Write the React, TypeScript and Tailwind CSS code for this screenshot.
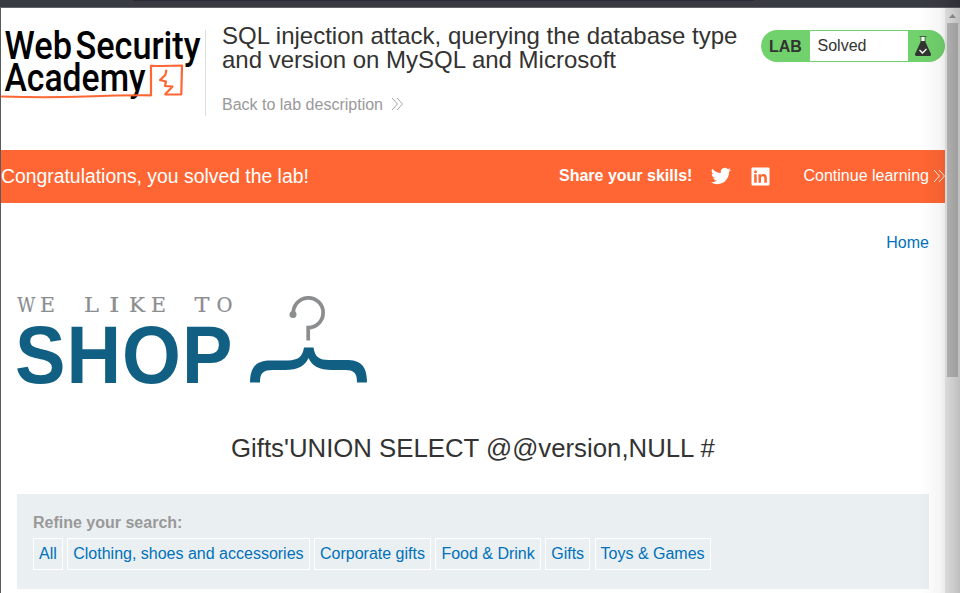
import React from "react";

const filters = ["All", "Clothing, shoes and accessories", "Corporate gifts", "Food & Drink", "Gifts", "Toys & Games"];

const shopLetters: [string, number, number][] = [
  ["W", 17.2, 18], ["E", 40, 15], ["L", 84, 15], ["I", 109, 10.5],
  ["K", 129, 16], ["E", 151, 15], ["T", 194.5, 15], ["O", 216.5, 16],
];

function Chevrons({ className }: { className: string }) {
  return (
    <svg className={className} width="13" height="14" viewBox="0 0 13 14" fill="none" stroke="currentColor" strokeWidth="0.9">
      <path d="M1 1l5.500 6L1 13M6 1l5.500 6L6 13" />
    </svg>
  );
}

function AcademyLogo() {
  return (
    <svg className="shrink-0 overflow-visible" width="205" height="86" viewBox="1 30 205 86" fill="none">
      <g fontFamily="Roboto, sans-serif" fontWeight="500" fill="#000" fontSize="38">
        <text x="4.500" y="58.700" textLength="67.500" lengthAdjust="spacingAndGlyphs">Web</text>
        <text x="75.500" y="58.700" textLength="125" lengthAdjust="spacingAndGlyphs">Security</text>
        <text x="4.500" y="91" textLength="141" lengthAdjust="spacingAndGlyphs">Academy</text>
      </g>
      <g stroke="#ff6633" strokeLinejoin="round" strokeLinecap="round">
        <path d="M2 96.500Q45 98 85 96.500T151 95.300L151 65.800Q166 66.300 182 65.500L181.300 94.300L165.500 94.500" strokeWidth="2.200" />
        <path d="M166.300 70.500L165.300 75L160 80L166 81.500L165 86L172.500 86.500L165.500 94" strokeWidth="2.200" />
      </g>
    </svg>
  );
}

function ShopLogo() {
  return (
    <svg className="block overflow-visible" width="352" height="94" viewBox="17 293 352 94">
      <g fontFamily="'DejaVu Serif', serif" fontSize="20" fill="#8b8d8f" stroke="#8b8d8f" strokeWidth="0.200">
        {shopLetters.map(([letter, x, width]) => (
          <text key={x} x={x} y="311.600" textLength={width} lengthAdjust="spacingAndGlyphs">{letter}</text>
        ))}
      </g>
      <text transform="translate(14.900 383) scale(.93 1)" fontFamily="'Liberation Sans', Arial, sans-serif" fontWeight="700" fontSize="81.400" letterSpacing="1.100" fill="#116084">SHOP</text>
      <path d="M293.400 314A14.900 14.900 0 1 1 308.200 327.600V340.400" fill="none" stroke="#8b8d8f" strokeWidth="3.700" />
      <circle cx="293" cy="314.400" r="3.500" fill="#8b8d8f" />
      <path d="M304 347.500H313.500C315 357 319 360 329 360H346C360 360 367 365 367 382.500H357C357 373 354 370 345 370H332C319 370 312 366 308.500 358C305 366 298 370 285 370H273C263 370 260 373 260 382.500H250C250 366 257 360.500 271 360.500H288C298 360 302.500 357 304 347.500Z" fill="#116084" />
    </svg>
  );
}

function LabStatus() {
  return (
    <div className="mt-[22px] flex h-8 w-[184px] shrink-0 overflow-hidden rounded-full bg-[#71d16c] text-[#333332]">
      <span className="w-[49px] pl-2 text-[16px] leading-[33px] font-bold">LAB</span>
      <span className="my-px w-[98px] bg-white pl-[7.500px] text-[16px] leading-[30px]">Solved</span>
      <svg className="mt-1.5 ml-[5px]" width="20" height="21" viewBox="0 0 20 21">
        <path d="M6.500.5h7M8 1v5M12 1v5" stroke="#333332" strokeOpacity=".7" strokeWidth="1" />
        <path d="M8.500 1h3v4h-3z" fill="#fff" />
        <path d="M8 5h4l6 13q.6 2-1.500 2h-13q-2 0-1.500-2z" fill="#333332" />
        <path d="M6.500 14l3 3 4-4" fill="none" stroke="#fff" strokeWidth="1.300" />
      </svg>
    </div>
  );
}

export default function App() {
  return (
    <div className="relative h-[593px] w-[960px] overflow-hidden bg-white font-['Liberation_Sans',Arial,sans-serif] text-[16px] text-[#333332]">
      <div className="h-2 border-b border-[#63646a] bg-[#393b43]">
        <div className="ml-[133px] h-px w-[621px] bg-[#292a36]" />
      </div>
      <div className="flex h-[585px]">
        <main className="flex w-[945px] shrink-0 flex-col border-l border-[#5b5b5d]">
          <header className="flex h-[142px]">
            <div className="pt-[22px]"><AcademyLogo /></div>
            <div className="mt-[22px] -ml-px h-[86px] w-px shrink-0 bg-[#dedede]" />
            <div className="w-[555px] shrink-0 pt-4 pl-4">
              <h1 className="text-[24px] leading-6 whitespace-nowrap">SQL injection attack, querying the database type<br />and version on MySQL and Microsoft</h1>
              <a className="mt-6 flex items-center leading-[18px] text-[#999]">Back to lab description<Chevrons className="mb-0.5 ml-2" /></a>
            </div>
            <LabStatus />
          </header>
          <section className="flex h-[53px] shrink-0 items-center overflow-hidden bg-[#ff6633] pb-0.5 text-white">
            <p className="w-[558px] shrink-0 pt-px text-[19.360px] leading-6">Congratulations, you solved the lab!</p>
            <b className="w-[151.500px] shrink-0 leading-5">Share your skills!</b>
            <svg className="shrink-0" width="20" height="20" viewBox="0 0 24 24" fill="currentColor">
              <path d="M23.950 4.570a10 10 0 0 1-2.820.770 4.960 4.960 0 0 0 2.160-2.720c-.95.550-2 .950-3.130 1.180A4.920 4.920 0 0 0 11.780 8.300C7.690 8.100 4.070 6.130 1.640 3.160a4.820 4.820 0 0 0 1.520 6.570 4.900 4.900 0 0 1-2.230-.61v.06a4.920 4.920 0 0 0 3.950 4.830 5 5 0 0 1-2.210.08 4.940 4.940 0 0 0 4.600 3.420A9.870 9.870 0 0 1 0 19.540a14 14 0 0 0 7.550 2.210c9.050 0 14-7.500 14-13.980l-.01-.64a9.940 9.940 0 0 0 2.410-2.560z" />
            </svg>
            <svg className="mt-0.5 ml-5 shrink-0" width="19" height="19" viewBox="0 0 19 19">
              <rect x=".5" y=".5" width="18" height="18" rx="1" fill="#fff" />
              <g fill="#ff6633"><circle cx="4.500" cy="4.700" r="1.500" /><path d="M3.200 7.200h2.500v8.500H3.200zM7.500 7.200h2.400v1.200c1.400-2.300 5.900-2 5.900 2.100v5.200h-2.500v-4.600c0-2.700-3.300-2.500-3.300 0v4.600H7.500z" /></g>
            </svg>
            <a className="ml-[34px] flex shrink-0 items-center leading-5 whitespace-nowrap">Continue learning<Chevrons className="mt-px ml-1 shrink-0" /></a>
          </section>
          <div className="px-4">
            <nav className="flex h-[90px] justify-end pt-[30px] leading-5 text-[#0071ba]"><a>Home</a></nav>
            <ShopLogo />
            <h2 className="mt-[46px] text-center text-[25.770px] leading-[30px]">Gifts'UNION SELECT @@version,NULL #</h2>
            <section className="mt-[31px] h-[95px] bg-[#eaeff2] px-4 pt-[19px]">
              <b className="block leading-5 text-[#999]">Refine your search:</b>
              <div className="mt-[5px] flex gap-[4.450px] whitespace-nowrap text-[#0071ba]">
                {filters.map((filter) => <a key={filter} className="h-8 border border-white px-[5px] leading-[30px]">{filter}</a>)}
              </div>
            </section>
          </div>
        </main>
        <aside className="w-[15px] bg-[#eeeeee]">
          <svg width="15" height="15"><path d="M4 10l3.500-4L11 10z" fill="#999" /></svg>
          <div className="ml-0.5 h-[354px] w-[11px] bg-[#c1c1c1]" />
        </aside>
      </div>
      <div className="pointer-events-none absolute inset-y-0 right-0 w-10 bg-linear-to-r from-transparent via-black/4 to-black/20" />
    </div>
  );
}
